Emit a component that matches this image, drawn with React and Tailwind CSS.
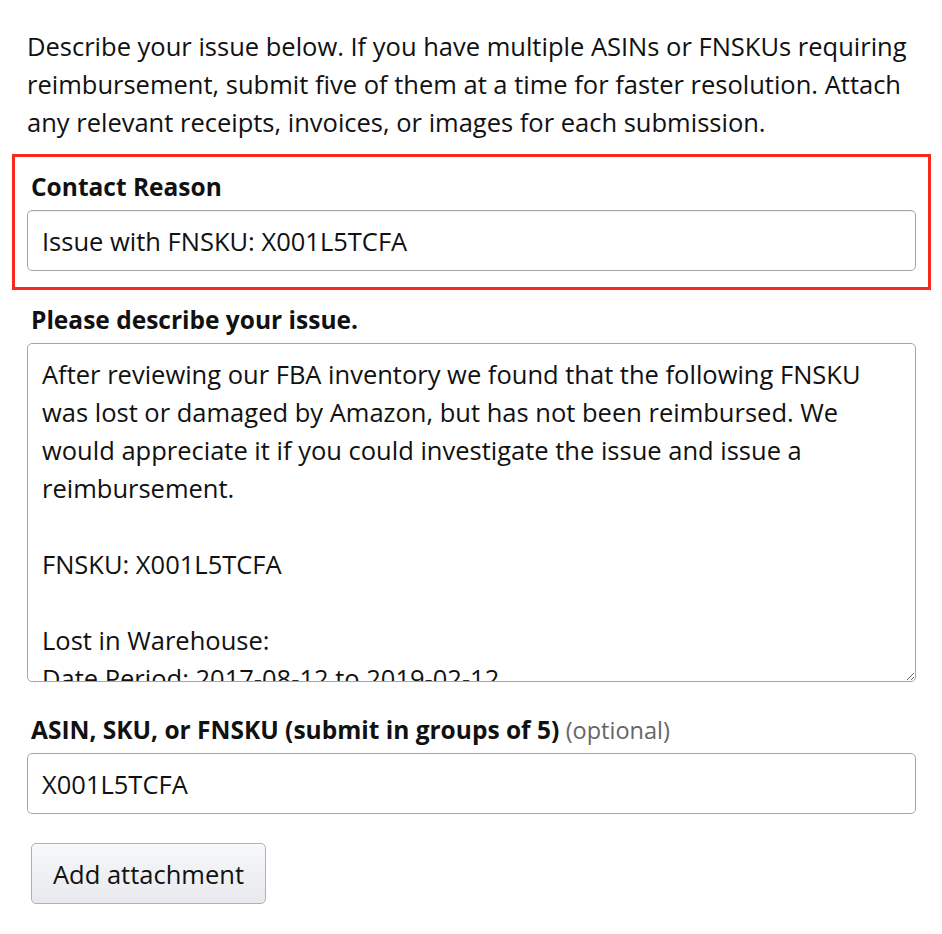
import { useState } from "react";

const fieldText =
  "After reviewing our FBA inventory we found that the following FNSKU was lost or damaged by Amazon, but has not been reimbursed. We would appreciate it if you could investigate the issue and issue a reimbursement.\n\nFNSKU: X001L5TCFA\n\nLost in Warehouse:\nDate Period: 2017-08-12 to 2019-02-12\nQuantity: 1";

const App = () => {
  const [reason, setReason] = useState("Issue with FNSKU: X001L5TCFA");
  const [issue, setIssue] = useState(fieldText);
  const [sku, setSku] = useState("X001L5TCFA");

  return (
    <main className="w-full min-h-screen bg-white text-[#111] font-['Open_Sans','Noto_Sans',sans-serif] text-[25.5px] leading-[38px]">
      <div className="pl-[27px] pr-[26px] pt-[27px]">
        <p className="mb-[13px]">
          Describe your issue below. If you have multiple ASINs or FNSKUs requiring reimbursement, submit five of them at a time for faster resolution. Attach any relevant receipts, invoices, or images for each submission.
        </p>

        {/* highlighted field */}
        <div className="-mx-[15px] border-[3px] border-[#f8291c] px-[12px] pt-[11px] pb-[16px]">
          <label className="block font-bold text-[24.5px] pl-[4px] leading-[38px] mb-[4px]">Contact Reason</label>
          <input
            value={reason}
            onChange={(e) => setReason(e.target.value)}
            className="w-full h-[61px] rounded-[5px] border border-[#a6a6a6] shadow-[inset_0_1px_0_rgba(0,0,0,0.06)] px-[14px] outline-none"
          />
        </div>

        <label className="block font-bold text-[24.5px] pl-[4px] mt-[11px] mb-[4px]">Please describe your issue.</label>
        <textarea
          value={issue}
          onChange={(e) => setIssue(e.target.value)}
          className="block w-full h-[339px] rounded-[5px] border border-[#a6a6a6] pl-[14px] pr-[40px] pt-[11px] outline-none resize-y overflow-hidden"
        />

        <label className="block font-bold text-[24.5px] pl-[4px] mt-[29px] mb-[4px]">
          ASIN, SKU, or FNSKU (submit in groups of 5){" "}
          <span className="font-normal text-[#666] text-[23.5px]">(optional)</span>
        </label>
        <input
          value={sku}
          onChange={(e) => setSku(e.target.value)}
          className="w-full h-[61px] rounded-[5px] border border-[#a6a6a6] px-[14px] outline-none"
        />

        <button className="mt-[29px] ml-[4px] h-[61px] w-[235px] rounded-[5px] border border-[#adb1b8] bg-gradient-to-b from-[#f7f8fa] to-[#e7e9ec] text-[#111] shadow-[0_1px_0_rgba(255,255,255,0.6)_inset]">
          Add attachment
        </button>
      </div>
    </main>
  );
};

export default App;
